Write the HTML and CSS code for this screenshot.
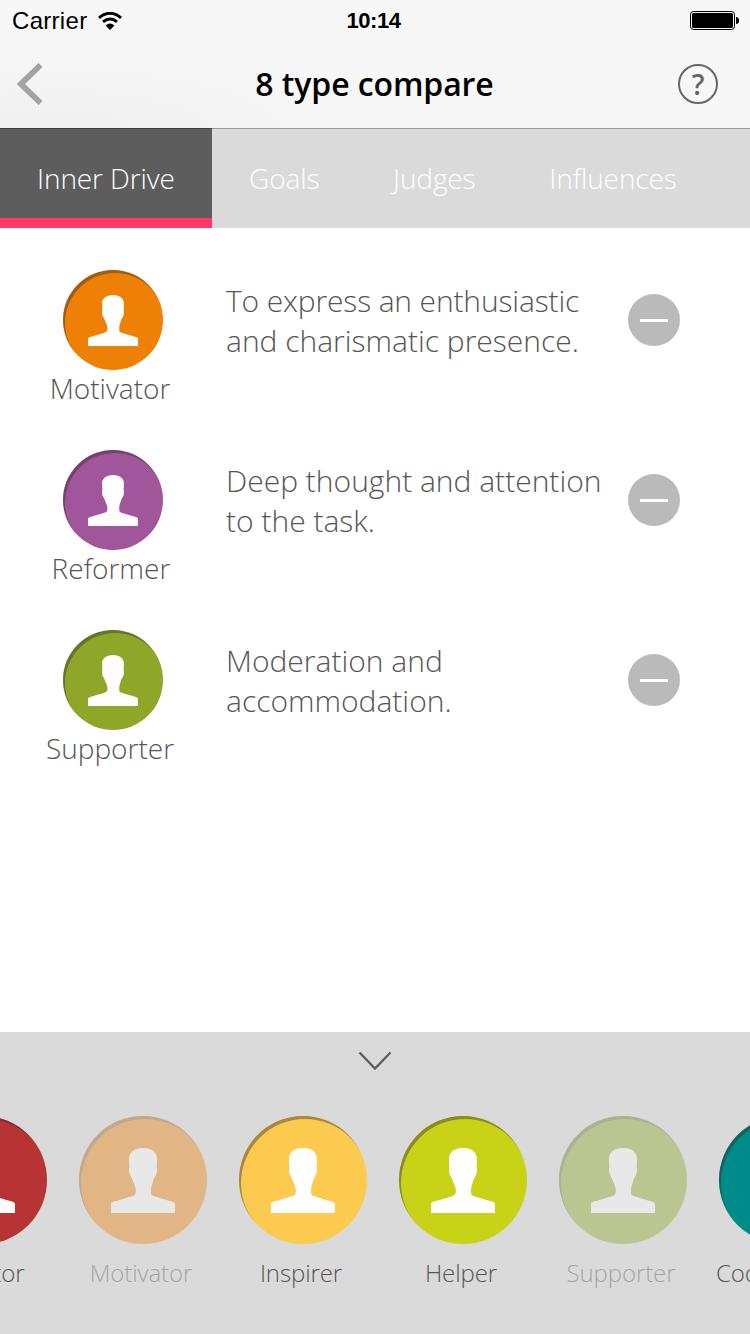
FILE: index.html
```html
<!DOCTYPE html>
<html lang="en">
<head>
<meta charset="utf-8">
<title>8 type compare</title>
<link rel="stylesheet" href="styles.css">
</head>
<body>
<svg class="defs" aria-hidden="true">
  <symbol id="person" viewBox="0 0 64 65">
    <path d="M32 0C23 0 18 4.500 18 11C18 14.500 18.500 17 18.300 19.500C17.800 22 18 25 19 27C20 29 21 30 21.500 32C22.500 35.500 24.800 38 24.900 42.500C25 46 24 47.300 21 48.200C14 50.300 8 52 3 53.600Q0 54.600 0 56V65H64V56Q64 54.600 61 53.600C56 52 50 50.300 43 48.200C40 47.300 40 46 40 42.500C40 38 41.500 35.500 42.500 32C43 30 44 29 45 27C46 25 46.200 22 45.700 19.500C45.500 17 46 14.500 46 11C46 4.500 41 0 32 0Z"/>
  </symbol>
</svg>
<div class="screen">
  <header class="header">
    <div class="status">
      <div class="carrier"><span class="operator">Carrier</span>
        <svg class="wifi" viewBox="0 0 24 18"><path d="M1 5.800Q12-3.200 23 5.800M5 9.900Q12 4.200 19 9.900" fill="none" stroke="#000" stroke-width="3"/><path d="M7.600 13.500Q12 9.700 16.400 13.500L12 18Z"/></svg>
      </div>
      <span class="time">10:14</span>
      <svg class="battery" viewBox="0 0 49 19"><rect x=".5" y=".5" width="44" height="18" rx="3" fill="none" stroke="#000"/><rect x="2" y="2" width="41" height="15" rx="1.500"/><path d="M46 6q3 0 3 3.500T46 13Z"/></svg>
    </div>
    <div class="navbar">
      <svg class="back" viewBox="0 0 26 42"><path d="M23.500 2L4 21L23.500 40" fill="none" stroke="#a3a3a3" stroke-width="5.800"/></svg>
      <h1 class="title">8 type compare</h1>
      <div class="help">?</div>
    </div>
  </header>
  <nav class="tabs">
    <div class="tab active">Inner Drive</div>
    <div class="tab">Goals</div>
    <div class="tab">Judges</div>
    <div class="tab">Influences</div>
  </nav>
  <main class="list">
    <section class="row">
      <div class="type"><div class="avatar orange"><svg><use href="#person"/></svg></div><span class="name">Motivator</span></div>
      <p class="text"><span class="tight">To express an enthusiastic</span><br>and charismatic presence.</p>
      <div class="remove"></div>
    </section>
    <section class="row">
      <div class="type"><div class="avatar purple"><svg><use href="#person"/></svg></div><span class="name shifted">Reformer</span></div>
      <p class="text">Deep thought and attention<br>to the task.</p>
      <div class="remove"></div>
    </section>
    <section class="row">
      <div class="type"><div class="avatar green"><svg><use href="#person"/></svg></div><span class="name">Supporter</span></div>
      <p class="text">Moderation and<br>accommodation.</p>
      <div class="remove"></div>
    </section>
  </main>
  <footer class="dock">
    <svg class="chevron" viewBox="0 0 34 20"><path d="M1.500 1.500L17 17.500L32.500 1.500" fill="none" stroke="#5d5d5d" stroke-width="2.300"/></svg>
    <div class="carousel">
      <div class="item"><div class="avatar big red"><svg><use href="#person"/></svg></div><span class="name">Director</span></div>
      <div class="item used"><div class="avatar big orange"><svg><use href="#person"/></svg></div><span class="name">Motivator</span></div>
      <div class="item"><div class="avatar big yellow"><svg><use href="#person"/></svg></div><span class="name">Inspirer</span></div>
      <div class="item"><div class="avatar big lime"><svg><use href="#person"/></svg></div><span class="name">Helper</span></div>
      <div class="item used"><div class="avatar big green"><svg><use href="#person"/></svg></div><span class="name">Supporter</span></div>
      <div class="item"><div class="avatar big teal"><svg><use href="#person"/></svg></div><span class="name last">Coordinator</span></div>
    </div>
  </footer>
</div>
</body>
</html>
```
FILE: styles.css
```css
* { box-sizing: border-box; }
body { margin: 0; font-family: "Open Sans", "Noto Sans", sans-serif; font-weight: 300; color: #555; }
.defs { display: none; }
.screen { width: 750px; height: 1334px; display: flex; flex-direction: column; overflow: hidden; background: #fff; }
.header { height: 128px; background: radial-gradient(ellipse 290px 80px at 50px 135px, #efefef, #f7f7f7); }
.status { height: 40px; padding: 0 11px 0 12px; display: grid; grid-template-columns: 1fr auto 1fr; align-items: center; font: 400 24px/40px "Liberation Sans", Arial, sans-serif; color: #000; }
.carrier { display: flex; align-items: center; gap: 11px; }
.operator { padding-top: 1px; letter-spacing: .3px; }
.wifi { width: 24px; height: 18px; }
.time { padding-top: 1px; font-weight: 700; font-size: 22px; letter-spacing: -.5px; margin-right: 4px; }
.battery { width: 49px; height: 19px; justify-self: end; }
.navbar { height: 88px; padding: 0 32px 0 17px; display: grid; grid-template-columns: 60px 1fr 45px; align-items: center; }
.back { width: 26px; height: 42px; }
.title { margin: 0; text-align: center; font-size: 32px; line-height: 44px; font-weight: 600; letter-spacing: -.1px; color: #000; padding-right: 1px; }
.help { width: 40px; height: 40px; justify-self: end; border: 2px solid #666; border-radius: 50%; font-size: 28px; line-height: 36px; font-weight: 600; text-align: center; color: #666; }
.tabs { height: 100px; display: flex; background: #dadada; border-top: 1px solid #999; color: #fff; font-size: 28px; letter-spacing: -.1px; }
.tab { padding: 0 36.700px 0 37px; height: 99px; line-height: 99px; white-space: nowrap; }
.active { width: 212px; margin-top: -1px; height: 100px; background: #5d5d5d; border-top: 1px solid #404040; border-bottom: 10px solid #ff3868; }
.list { flex: 1; padding: 42px 70px 0 0; }
.row { height: 180px; display: grid; grid-template-columns: 226px 1fr 52px; }
.type { display: flex; flex-direction: column; align-items: flex-start; padding-left: 63px; }
.avatar { width: 100px; height: 100px; flex: none; border-radius: 50%; display: flex; justify-content: center; padding-top: 25px; box-shadow: inset 2px 3px 0 rgba(47, 43, 48, .42); }
.avatar svg { width: 50px; height: 51px; fill: #fff; }
.type .name { width: 160px; margin: -1px 0 0 -33px; text-align: center; font-size: 28px; line-height: 38px; }
.type .shifted { margin-left: -32px; }
.text { margin: 11px 0 0; font-size: 30px; line-height: 40px; white-space: nowrap; }
.tight { letter-spacing: -.15px; }
.remove { width: 52px; height: 52px; margin-top: 24px; border-radius: 50%; background: #bababa; display: grid; place-items: center; }
.remove::before { content: ""; width: 28px; height: 3px; background: #fff; }
.dock { height: 302px; background: #dadada; padding-top: 19px; overflow: hidden; }
.chevron { display: block; width: 34px; height: 20px; margin: 0 auto; }
.carousel { display: flex; gap: 32px; margin: 45px 0 0 -81px; }
.item { width: 128px; flex: none; }
.item .name { display: block; width: 124px; text-align: center; font-size: 24px; line-height: 34px; margin-top: 12px; white-space: nowrap; letter-spacing: -.1px; }
.item .last { margin-left: -3px; }
.big { width: 128px; height: 128px; padding-top: 32px; }
.big svg { width: 64px; height: 65px; }
.used { opacity: .4; }
.orange { background: #ee8005; }
.purple { background: #a1569b; }
.green { background: #8ea728; }
.red { background: #b83333; }
.yellow { background: #fdca50; }
.lime { background: #c8d317; }
.teal { background: #008b8b; }
```
